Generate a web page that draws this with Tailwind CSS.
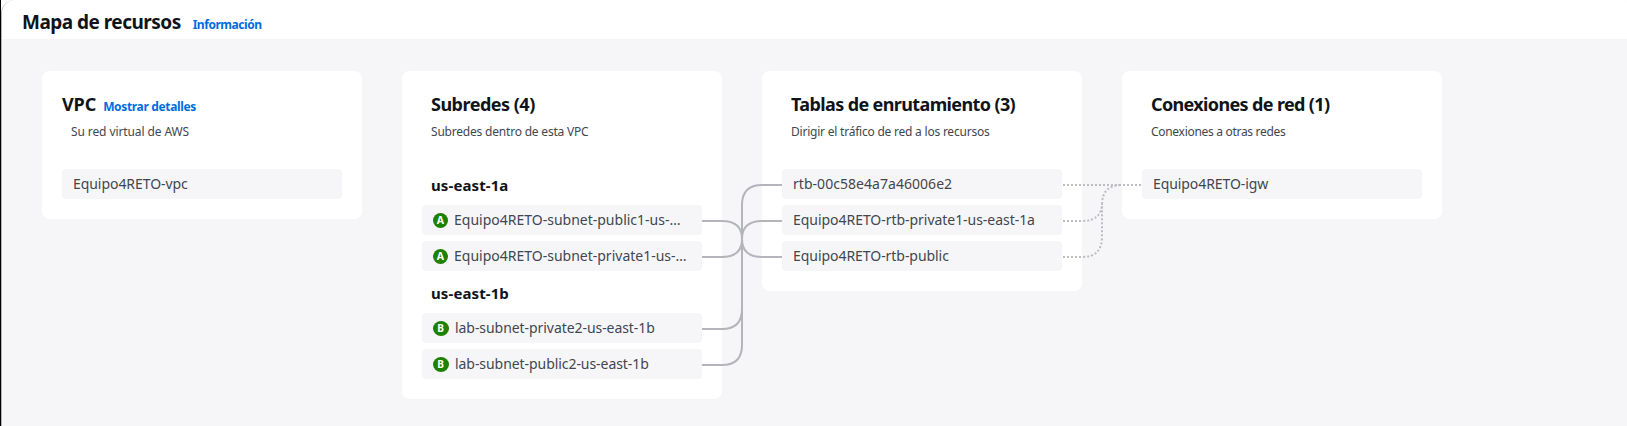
<!DOCTYPE html>
<html lang="es">
<head>
<meta charset="utf-8">
<title>Mapa de recursos</title>
<script src="https://cdn.jsdelivr.net/npm/@tailwindcss/browser@4"></script>
</head>
<body class="bg-[#f6f6f9] font-['Noto_Sans','Open_Sans',sans-serif] text-[#424650]">
<div class="h-[426px] w-[1627px] overflow-hidden border-l border-black bg-white">
  <div class="h-full overflow-hidden rounded-tl-[14px] rounded-tr-[4px] border-l border-[#b4b4bb] bg-[#f6f6f9]">
    <header class="flex h-[39px] items-baseline gap-[12px] bg-white pl-5 pt-[8px] leading-7">
      <h1 class="text-[19px] font-bold tracking-[-0.52px] text-[#0f141a]">Mapa de recursos</h1>
      <a class="text-[12px] font-bold tracking-[-0.46px] text-[#006ce0]">Información</a>
    </header>
    <main class="relative flex items-start gap-10 pl-10 pt-8">
      <section class="h-[148px] w-80 rounded-lg bg-white px-5 pt-[19px]">
        <div class="flex h-[28px] items-baseline gap-[7px] leading-7">
          <h2 class="text-[18px] font-bold tracking-[-0.1px] text-[#0f141a]">VPC</h2>
          <a class="text-[12px] font-bold tracking-[-0.34px] text-[#006ce0]">Mostrar detalles</a>
        </div>
        <p class="mt-[6px] pl-[9px] text-[12px] leading-4 tracking-[-0.1px]">Su red virtual de AWS</p>
        <div class="mt-[29px] h-[30px] rounded-sm bg-[#f6f6f9] pl-[11px] text-[14px] leading-[30px] tracking-[-0.06px]">Equipo4RETO-vpc</div>
      </section>

      <section class="h-[328px] w-80 rounded-lg bg-white px-5 pt-[19px]">
        <h2 class="h-[28px] pl-[9px] text-[18px] font-bold leading-7 tracking-[-0.5px] text-[#0f141a]">Subredes (4)</h2>
        <p class="mt-[6px] pl-[9px] text-[12px] leading-4 tracking-[-0.2px]">Subredes dentro de esta VPC</p>
        <h3 class="mt-[29px] h-[36px] pl-[9px] text-[15px] font-bold leading-[33px] tracking-[0.1px] text-[#0f141a]">us-east-1a</h3>
        <div class="flex flex-col gap-1.5 text-[14px] leading-[30px]">
          <div class="flex h-[30px] items-center gap-[6px] rounded-sm bg-[#f6f6f9] pl-[11px]">
            <svg class="size-[15px] shrink-0" viewBox="0 0 15 15"><circle cx="7.5" cy="7.5" r="7.5" fill="#1d8102"/><text x="7.5" y="11.2" text-anchor="middle" font-size="10.5" font-weight="700" fill="#fff">A</text></svg>
            <span>Equipo4RETO-subnet-public1-us-…</span>
          </div>
          <div class="flex h-[30px] items-center gap-[6px] rounded-sm bg-[#f6f6f9] pl-[11px]">
            <svg class="size-[15px] shrink-0" viewBox="0 0 15 15"><circle cx="7.5" cy="7.5" r="7.5" fill="#1d8102"/><text x="7.5" y="11.2" text-anchor="middle" font-size="10.5" font-weight="700" fill="#fff">A</text></svg>
            <span>Equipo4RETO-subnet-private1-us-…</span>
          </div>
        </div>
        <h3 class="mt-1.5 h-[36px] pl-[9px] text-[15px] font-bold leading-[33px] tracking-[0.1px] text-[#0f141a]">us-east-1b</h3>
        <div class="flex flex-col gap-1.5 text-[14px] leading-[30px] tracking-[-0.06px]">
          <div class="flex h-[30px] items-center gap-[6px] rounded-sm bg-[#f6f6f9] pl-[11px]">
            <svg class="h-[15px] w-[16px] shrink-0" viewBox="0 0 16 15"><ellipse cx="8" cy="7.5" rx="8" ry="7.5" fill="#1d8102"/><text x="7.5" y="11.2" text-anchor="middle" font-size="10" font-weight="700" fill="#fff">B</text></svg>
            <span>lab-subnet-private2-us-east-1b</span>
          </div>
          <div class="flex h-[30px] items-center gap-[6px] rounded-sm bg-[#f6f6f9] pl-[11px]">
            <svg class="h-[15px] w-[16px] shrink-0" viewBox="0 0 16 15"><ellipse cx="8" cy="7.5" rx="8" ry="7.5" fill="#1d8102"/><text x="7.5" y="11.2" text-anchor="middle" font-size="10" font-weight="700" fill="#fff">B</text></svg>
            <span>lab-subnet-public2-us-east-1b</span>
          </div>
        </div>
      </section>

      <section class="h-[220px] w-80 rounded-lg bg-white px-5 pt-[19px]">
        <h2 class="h-[28px] pl-[9px] text-[18px] font-bold leading-7 tracking-[-0.62px] text-[#0f141a]">Tablas de enrutamiento (3)</h2>
        <p class="mt-[6px] pl-[9px] text-[12px] leading-4 tracking-[-0.22px]">Dirigir el tráfico de red a los recursos</p>
        <div class="mt-[29px] flex flex-col gap-1.5 text-[14px] leading-[30px]">
          <div class="h-[30px] rounded-sm bg-[#f6f6f9] pl-[11px] tracking-[0.04px]">rtb-00c58e4a7a46006e2</div>
          <div class="h-[30px] rounded-sm bg-[#f6f6f9] pl-[11px] tracking-[-0.04px]">Equipo4RETO-rtb-private1-us-east-1a</div>
          <div class="h-[30px] rounded-sm bg-[#f6f6f9] pl-[11px] tracking-[-0.05px]">Equipo4RETO-rtb-public</div>
        </div>
      </section>

      <section class="h-[148px] w-80 rounded-lg bg-white px-5 pt-[19px]">
        <h2 class="h-[28px] pl-[9px] text-[18px] font-bold leading-7 tracking-[-0.64px] text-[#0f141a]">Conexiones de red (1)</h2>
        <p class="mt-[6px] pl-[9px] text-[12px] leading-4 tracking-[-0.3px]">Conexiones a otras redes</p>
        <div class="mt-[29px] h-[30px] rounded-sm bg-[#f6f6f9] pl-[11px] text-[14px] leading-[30px] tracking-[-0.08px]">Equipo4RETO-igw</div>
      </section>

      <!-- connectors between columns -->
      <svg class="absolute left-[700px] top-[130px] h-[220px] w-[80px]" viewBox="702 169 80 220" fill="none" stroke="#b4b4bb" stroke-width="2">
        <path d="M702 221H722Q742 221 742 239Q742 257 762 257H782"/>
        <path d="M702 257H722Q742 257 742 239Q742 221 762 221H782"/>
        <path d="M702 329H722Q742 329 742 309V205Q742 185 762 185H782"/>
        <path d="M702 365H722Q742 365 742 345V309"/>
      </svg>
      <svg class="absolute left-[1060px] top-[130px] h-[110px] w-[80px]" viewBox="1062 169 80 110" fill="none" stroke="#bcbcc2" stroke-width="2" stroke-dasharray="2 2" stroke-dashoffset="-1">
        <path d="M1062 185H1142"/>
        <path d="M1062 221H1082Q1102 221 1102 203"/>
        <path d="M1062 257H1082Q1102 257 1102 237V205Q1102 185 1122 185"/>
      </svg>
    </main>
  </div>
</div>
</body>
</html>
